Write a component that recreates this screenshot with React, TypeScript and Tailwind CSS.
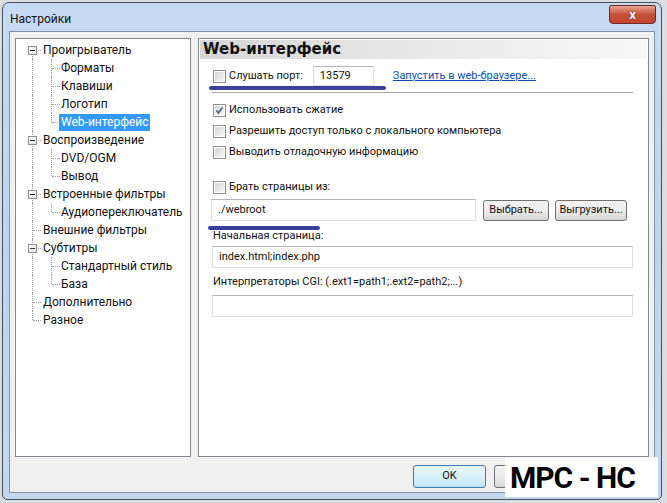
import type { ReactNode } from 'react';

type TreeRow = {
  label: string;
  level: 0 | 1;
  expandable?: boolean;
  first?: boolean;
  lastRoot?: boolean;
  lastChild?: boolean;
  selected?: boolean;
};

const TREE: TreeRow[] = [
  { label: 'Проигрыватель', level: 0, expandable: true, first: true },
  { label: 'Форматы', level: 1 },
  { label: 'Клавиши', level: 1 },
  { label: 'Логотип', level: 1 },
  { label: 'Web-интерфейс', level: 1, lastChild: true, selected: true },
  { label: 'Воспроизведение', level: 0, expandable: true },
  { label: 'DVD/OGM', level: 1 },
  { label: 'Вывод', level: 1, lastChild: true },
  { label: 'Встроенные фильтры', level: 0, expandable: true },
  { label: 'Аудиопереключатель', level: 1, lastChild: true },
  { label: 'Внешние фильтры', level: 0 },
  { label: 'Субтитры', level: 0, expandable: true },
  { label: 'Стандартный стиль', level: 1 },
  { label: 'База', level: 1, lastChild: true },
  { label: 'Дополнительно', level: 0 },
  { label: 'Разное', level: 0, lastRoot: true },
];

const FONT = "font-['Roboto',_'Noto_Sans',_sans-serif]";

function TreeItem({ row }: { row: TreeRow }) {
  return (
    <div className="relative flex h-[18px] items-center">
      {row.level === 0 ? (
        <>
          <span
            className={`absolute left-[16px] border-l border-dotted border-[#a0a0a0] ${
              row.first ? 'top-[9px]' : 'top-0'
            } ${row.lastRoot ? 'h-[9px]' : 'bottom-0'}`}
          />
          <span className="absolute left-[17px] top-[9px] w-[8px] border-t border-dotted border-[#a0a0a0]" />
          {row.expandable && (
            <span className="absolute left-[12px] top-[5px] flex h-[9px] w-[9px] items-center justify-center border border-[#919191] bg-gradient-to-br from-white to-[#e4e4e4]">
              <span className="h-px w-[5px] bg-[#333]" />
            </span>
          )}
          <span className="ml-[26px] px-[1px] text-[12px] leading-[17px] text-[#111]">{row.label}</span>
        </>
      ) : (
        <>
          <span className="absolute bottom-0 left-[16px] top-0 border-l border-dotted border-[#a0a0a0]" />
          <span
            className={`absolute left-[35px] top-0 border-l border-dotted border-[#a0a0a0] ${
              row.lastChild ? 'h-[9px]' : 'bottom-0'
            }`}
          />
          <span className="absolute left-[36px] top-[9px] w-[8px] border-t border-dotted border-[#a0a0a0]" />
          <span
            className={`ml-[43px] px-[2px] text-[12px] leading-[17px] ${
              row.selected ? 'bg-[#3399ff] text-white' : 'text-[#111]'
            }`}
          >
            {row.label}
          </span>
        </>
      )}
    </div>
  );
}

function Checkbox({ checked = false }: { checked?: boolean }) {
  return (
    <span className="relative flex h-[13px] w-[13px] shrink-0 items-center justify-center border border-[#8e8f8f] bg-white">
      <span className="h-[9px] w-[9px] bg-gradient-to-br from-[#d6d6d6] to-[#f6f6f6]" />
      {checked && (
        <svg viewBox="0 0 11 11" className="absolute left-0 top-0 h-[11px] w-[11px]">
          <path d="M2.5 5.5 L4.5 8 L8.5 2.5" fill="none" stroke="#4a5f8a" strokeWidth="1.6" />
        </svg>
      )}
    </span>
  );
}

function CheckRow({ label, checked, className = '' }: { label: string; checked?: boolean; className?: string }) {
  return (
    <div className={`flex h-[21px] items-center gap-[3px] pl-[13px] ${className}`}>
      <Checkbox checked={checked} />
      <span className="text-[11px] text-[#111]">{label}</span>
    </div>
  );
}

function TextBox({ children, className = '' }: { children?: ReactNode; className?: string }) {
  return (
    <div
      className={`flex h-[22px] items-center border border-[#dcdfe4] border-t-[#b4b7bd] bg-white px-[6px] text-[11px] text-[#111] ${className}`}
    >
      {children}
    </div>
  );
}

function WinButton({ children, className = '' }: { children?: ReactNode; className?: string }) {
  return (
    <div
      className={`flex items-center justify-center rounded-[3px] border border-[#707070] bg-gradient-to-b from-[#f3f3f3] via-[#ebebeb] to-[#d6d6d6] text-[11px] text-[#111] ${className}`}
    >
      {children}
    </div>
  );
}

export default function App() {
  return (
    <div className={`relative h-[503px] w-[667px] overflow-hidden bg-[#d9dde2] p-[2px] ${FONT}`}>
      <div className="flex h-[498px] w-[660px] flex-col rounded-t-[7px] rounded-b-[5px] border border-[#47505c] bg-gradient-to-b from-[#c6dbf1] via-[#bcd4ee] to-[#c3d8ee]">
        <div className="flex h-[28px] items-start justify-between pl-[7px] pr-[5px]">
          <span className="mt-[7px] text-[12px] text-[#111]">Настройки</span>
          <div className="mt-[2px] flex h-[19px] w-[47px] items-center justify-center rounded-b-[4px] rounded-t-[2px] border border-[#6b2a22] bg-gradient-to-b from-[#e8a493] via-[#c7503a] to-[#c6452f] text-[13px] font-bold text-white">
            <span className="leading-none [text-shadow:0_0_2px_#5a1a10]">x</span>
          </div>
        </div>
        <div className="mx-[6px] mb-[6px] flex flex-1 flex-col border border-[#7e93ad] bg-[#f0f0f0] px-[5px] pt-[6px]">
          <div className="flex h-[419px] gap-[7px]">
            <div className="w-[176px] border border-[#828790] bg-white pt-[2px]">
              {TREE.map((row) => (
                <TreeItem key={row.label} row={row} />
              ))}
            </div>
            <div className="relative flex flex-1 flex-col border border-[#828790] bg-white p-[1px]">
              <div className="flex h-[19px] items-center bg-gradient-to-r from-[#d6d6d6] via-[#e9e9e9] to-[#f7f7f7] pl-[3px] font-['DejaVu_Sans',_sans-serif] text-[15px] font-bold text-[#111]">
                Web-интерфейс
              </div>
              <div className="mt-[6px] flex h-[22px] items-center pl-[13px]">
                <Checkbox />
                <span className="ml-[3px] text-[11px] text-[#111]">Слушать порт:</span>
                <TextBox className="ml-[10px] w-[61px] !h-[20px]">13579</TextBox>
                <span className="ml-[19px] text-[11px] text-[#0b4fb0] underline">Запустить в web-браузере...</span>
              </div>
              <div className="ml-[12px] mr-[14px] mt-[5px] h-px bg-[#a7a7a7]" />
              <CheckRow label="Использовать сжатие" checked className="mt-[7px]" />
              <CheckRow label="Разрешить доступ только с локального компьютера" />
              <CheckRow label="Выводить отладочную информацию" />
              <CheckRow label="Брать страницы из:" className="mt-[14px]" />
              <div className="mt-[1px] flex items-center pl-[11px]">
                <TextBox className="w-[265px]">./webroot</TextBox>
                <WinButton className="ml-[7px] h-[21px] w-[66px]">Выбрать...</WinButton>
                <WinButton className="ml-[6px] h-[21px] w-[72px]">Выгрузить...</WinButton>
              </div>
              <div className="mt-[7px] pl-[13px] text-[11px] leading-[16px] text-[#111]">Начальная страница:</div>
              <TextBox className="ml-[12px] mr-[14px] mt-[2px]">index.html;index.php</TextBox>
              <div className="mt-[6px] pl-[13px] text-[11px] leading-[16px] text-[#111]">
                Интерпретаторы CGI: (.ext1=path1;.ext2=path2;...)
              </div>
              <TextBox className="ml-[12px] mr-[14px] mt-[5px]" />
              <span className="absolute left-[10px] top-[47px] h-[4px] w-[177px] rounded-full bg-[#3a3f9c]" />
              <span className="absolute left-[9px] top-[187px] h-[4px] w-[112px] rounded-full bg-[#3a3f9c]" />
            </div>
          </div>
          <div className="mt-[8px] flex gap-[8px] pl-[398px]">
            <div className="flex h-[23px] w-[73px] items-center justify-center rounded-[3px] border border-[#3c7fb1] bg-gradient-to-b from-[#eaf6fd] via-[#d9f0fc] to-[#bee6fd] text-[11px] text-[#111]">
              OK
            </div>
            <WinButton className="h-[23px] w-[73px]" />
          </div>
        </div>
      </div>
      <div className="absolute left-[505px] top-[457px] flex h-[40px] w-[153px] items-center bg-white pl-[5px] font-['Roboto',_sans-serif] text-[30px] font-bold tracking-[-1px] text-black">
        MPC - HC
      </div>
    </div>
  );
}
